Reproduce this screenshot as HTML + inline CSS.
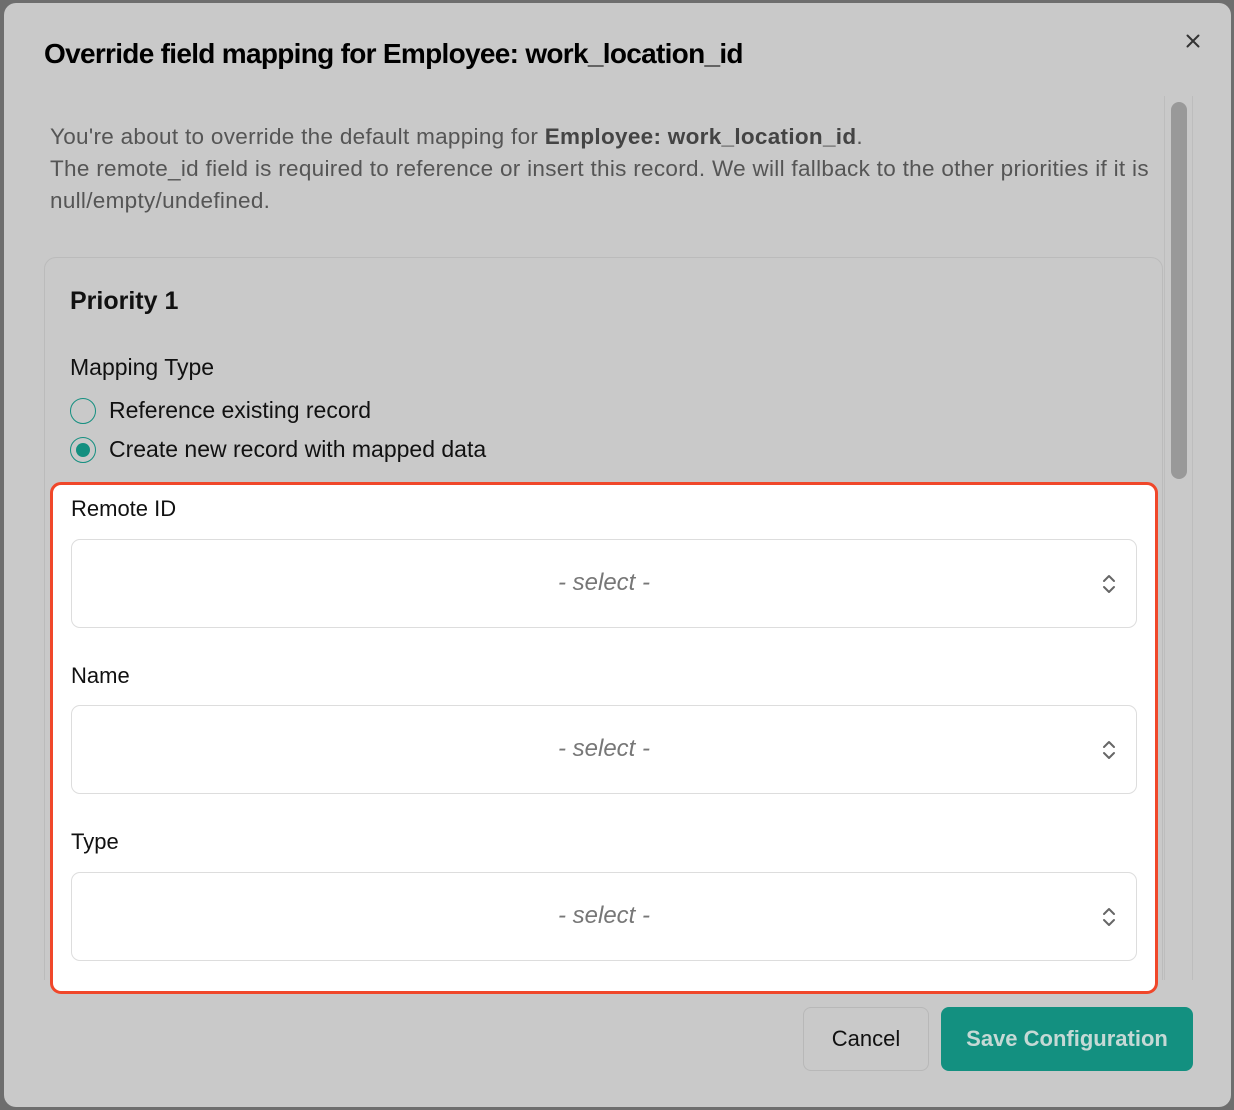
<!DOCTYPE html>
<html><head><meta charset="utf-8"><style>
*{box-sizing:border-box;margin:0;padding:0}
html,body{width:1234px;height:1110px;overflow:hidden;background:#6e6e6e;font-family:"Liberation Sans",sans-serif}
.dlg{position:absolute;left:4px;top:3px;width:1227px;height:1104px;background:#c9c9c9;border-radius:12px}
.abs{position:absolute}
.title{left:44px;top:38px;font-size:28px;font-weight:bold;color:#000;letter-spacing:-0.7px}
.desc{left:50px;top:121px;font-size:22.5px;line-height:32px;color:#555;width:1125px;letter-spacing:0.3px}
.desc b{color:#444}
.track{left:1164px;top:96px;width:29px;height:884px;border-left:1px solid #bdbdbd;border-right:1px solid #bdbdbd}
.thumb{left:1171px;top:102px;width:16px;height:377px;border-radius:8px;background:#999}
.cardclip{left:44px;top:257px;width:1119px;height:723px;overflow:hidden}
.card{position:absolute;left:0;top:0;width:1119px;height:800px;border:1px solid #bbb;border-radius:12px}
.h2{left:70px;top:287px;font-size:25px;font-weight:bold;color:#111}
.lbl{font-size:22px;color:#111}
.lbl2{font-size:23px;color:#111}
.radio{width:26px;height:26px;border-radius:50%;border:1.5px solid #148f80;background:#c9c9c9}
.radio.on::after{content:"";position:absolute;left:4.5px;top:4.5px;width:14px;height:14px;border-radius:50%;background:#148f80}
.hl{left:50px;top:482px;width:1108px;height:512px;background:#fff;border:3px solid #f0472a;border-radius:11px}
.sel{left:71px;width:1066px;height:89px;border:1px solid #ddd;border-radius:9px;background:#fff}
.sel span{position:absolute;left:0;right:0;top:29px;text-align:center;font-size:24px;font-style:italic;color:#777}
.sel svg{position:absolute;right:20px;top:34px}
.btn{top:1007px;height:64px;border-radius:8px;font-size:22px;display:flex;align-items:center;justify-content:center}
.cancel{left:803px;width:126px;border:1px solid #b8b8b8;color:#111}
.save{left:941px;width:252px;background:#139080;color:#c5d9d5;font-weight:bold}
</style></head><body>
<div class="dlg"></div>
<div class="abs title">Override field mapping for Employee: work_location_id</div>
<svg class="abs" style="left:1186px;top:34px" width="14" height="14" viewBox="0 0 14 14"><path d="M1.5 1.5l11 11M12.5 1.5l-11 11" stroke="#333" stroke-width="2" stroke-linecap="round"/></svg>
<div class="abs desc">You're about to override the default mapping for <b>Employee: work_location_id</b>.<br>The remote_id field is required to reference or insert this record. We will fallback to the other priorities if it is null/empty/undefined.</div>
<div class="abs track"></div>
<div class="abs thumb"></div>
<div class="abs cardclip"><div class="card"></div></div>
<div class="abs h2">Priority 1</div>
<div class="abs lbl2" style="left:70px;top:354px">Mapping Type</div>
<div class="abs radio" style="left:70px;top:398px"></div>
<div class="abs lbl2" style="left:109px;top:397px">Reference existing record</div>
<div class="abs radio on" style="left:70px;top:437px"></div>
<div class="abs lbl2" style="left:109px;top:436px">Create new record with mapped data</div>
<div class="abs hl"></div>
<div class="abs lbl" style="left:71px;top:496px">Remote ID</div>
<div class="abs sel" style="top:539px"><span>- select -</span><svg width="14" height="20" viewBox="0 0 14 20"><path d="M2 7l5-5 5 5M2 13l5 5 5-5" fill="none" stroke="#666" stroke-width="2" stroke-linecap="round" stroke-linejoin="round"/></svg></div>
<div class="abs lbl" style="left:71px;top:663px">Name</div>
<div class="abs sel" style="top:705px"><span>- select -</span><svg width="14" height="20" viewBox="0 0 14 20"><path d="M2 7l5-5 5 5M2 13l5 5 5-5" fill="none" stroke="#666" stroke-width="2" stroke-linecap="round" stroke-linejoin="round"/></svg></div>
<div class="abs lbl" style="left:71px;top:829px">Type</div>
<div class="abs sel" style="top:872px"><span>- select -</span><svg width="14" height="20" viewBox="0 0 14 20"><path d="M2 7l5-5 5 5M2 13l5 5 5-5" fill="none" stroke="#666" stroke-width="2" stroke-linecap="round" stroke-linejoin="round"/></svg></div>
<div class="abs btn cancel">Cancel</div>
<div class="abs btn save">Save Configuration</div>
</body></html>
